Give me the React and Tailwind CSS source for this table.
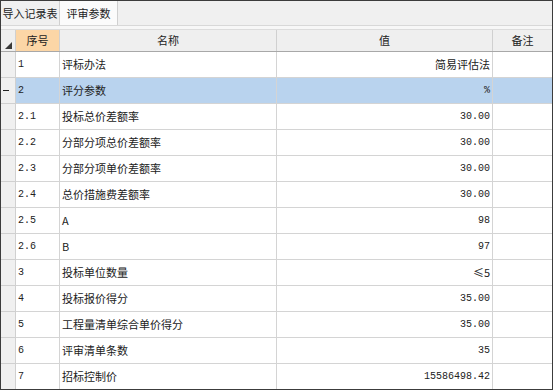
import React from 'react';

const rows = [
  { no: '1', name: '评标办法', value: '简易评估法', cjk: true },
  { no: '2', name: '评分参数', value: '%', selected: true, collapse: true },
  { no: '2.1', name: '投标总价差额率', value: '30.00' },
  { no: '2.2', name: '分部分项总价差额率', value: '30.00' },
  { no: '2.3', name: '分部分项单价差额率', value: '30.00' },
  { no: '2.4', name: '总价措施费差额率', value: '30.00' },
  { no: '2.5', name: 'A', value: '98' },
  { no: '2.6', name: 'B', value: '97' },
  { no: '3', name: '投标单位数量', value: '≤5', cjk: true },
  { no: '4', name: '投标报价得分', value: '35.00' },
  { no: '5', name: '工程量清单综合单价得分', value: '35.00' },
  { no: '6', name: '评审清单条数', value: '35' },
  { no: '7', name: '招标控制价', value: '15586498.42' },
];

const cols = 'grid grid-cols-[15px_44px_217px_216px_59px]';
const cjk = "font-['Noto_Sans_CJK_SC',sans-serif]";
const mono = "font-['Liberation_Mono',monospace]";

const App = () => {
  return (
    <div className={`w-[553px] h-[390px] border border-[#3c3c3c] bg-white overflow-hidden ${cjk} text-[#222]`}>
      {/* tabs */}
      <div className="h-[25px] flex bg-[#f0f0f0] border-b border-[#d8d8d8]">
        <div className="w-[59px] flex items-center justify-center text-[11px] border-r border-[#d0d0d0]">导入记录表</div>
        <div className="w-[58px] flex items-center justify-center text-[11px] bg-[#fbfbfb] border-r border-[#d0d0d0]">评审参数</div>
      </div>
      <div className="h-[3px] bg-[#f7f7f7]" />

      {/* header */}
      <div className={`${cols} h-[23px] bg-[#efefef] border-t border-[#dcdcdc] border-b border-b-[#a8a8a8] text-[11px]`}>
        <div className="relative border-r border-[#d0d0d0]">
          <div className="absolute right-[3px] bottom-[2px] w-0 h-0 border-l-[7px] border-l-transparent border-b-[7px] border-b-[#3a3a3a]" />
        </div>
        <div className="flex items-center justify-center bg-[#fcd6a6] border-r border-[#d0d0d0]">序号</div>
        <div className="flex items-center justify-center border-r border-[#d0d0d0]">名称</div>
        <div className="flex items-center justify-center border-r border-[#d0d0d0]">值</div>
        <div className="flex items-center justify-center">备注</div>
      </div>

      {/* rows */}
      {rows.map((r) => (
        <div key={r.no} className={`${cols} h-[26px] text-[11px]`}>
          <div className="flex items-center justify-center bg-[#f0f0f0] border-r border-b border-[#d0d0d0]">
            {r.collapse && <div className="w-[6px] h-[1px] bg-[#222] -ml-[4px]" />}
          </div>
          <div className={`flex items-center pl-[2px] border-r border-b border-[#d4d4d4] ${mono} text-[10px] ${r.selected ? 'bg-[#b9d3ee]' : ''}`}>
            {r.no}
          </div>
          <div className={`flex items-center pl-[2px] border-r border-b border-[#d4d4d4] ${r.selected ? 'bg-[#b9d3ee]' : ''}`}>
            {r.name}
          </div>
          <div className={`flex items-center justify-end pr-[2px] border-r border-b border-[#d4d4d4] ${r.cjk ? '' : `${mono} text-[10px]`} ${r.selected ? 'bg-[#b9d3ee]' : ''}`}>
            {r.value}
          </div>
          <div className={`border-b border-[#d4d4d4] ${r.selected ? 'bg-[#b9d3ee]' : ''}`} />
        </div>
      ))}
    </div>
  );
};

export default App;
